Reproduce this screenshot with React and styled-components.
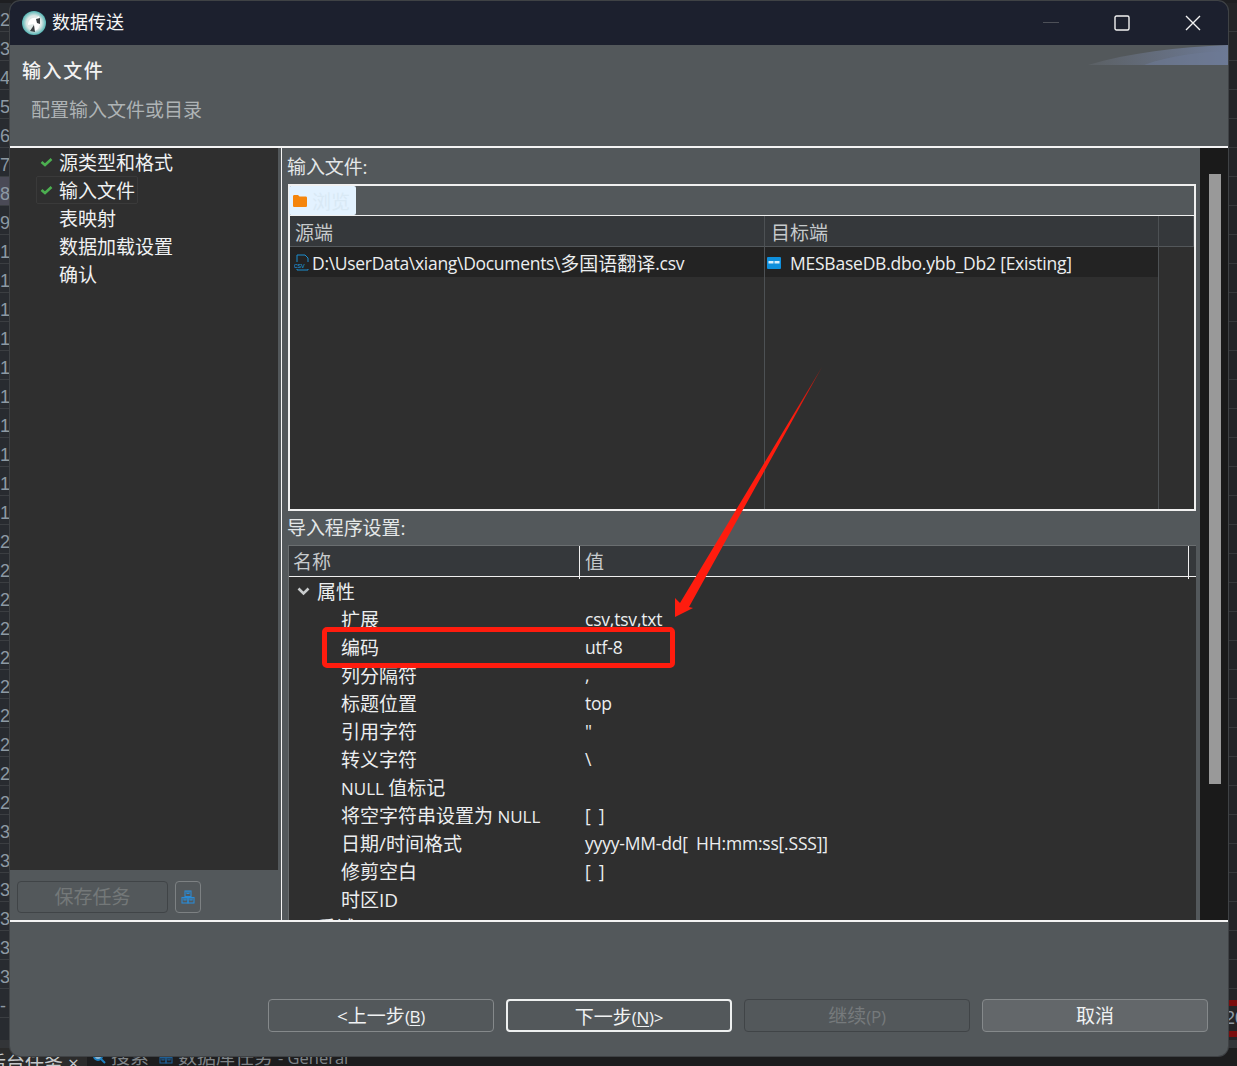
import React from "react";
import styled, { createGlobalStyle } from "styled-components";

const FONT = `"Open Sans", "Noto Sans CJK SC", sans-serif`;

const Global = createGlobalStyle`
  html, body { margin: 0; padding: 0; background: #1e1f22; }
  * { box-sizing: border-box; }
  body { font-family: ${FONT}; font-size: 18px; color: #eef0f1; }
`;

const Desktop = styled.div`
  position: relative;
  width: 1237px;
  height: 1066px;
  overflow: hidden;
  display: flex;
  flex-direction: column;
  background: #1e1f22;
`;
const Editor = styled.div`
  flex: 1;
  min-height: 0;
  padding-top: 3px;
  display: flex;
  justify-content: space-between;
  overflow: hidden;
`;
const Gutter = styled.div`
  width: 11px;
  display: flex;
  flex-direction: column;
  background: #282b30;
`;
const RightStrip = styled(Gutter)`
  width: 10px;
  background: #232427;
`;
const LineNo = styled.div`
  height: 29px;
  flex: none;
  border-bottom: 1px solid #3b3e42;
  font: 18px/34px "Liberation Sans", sans-serif;
  color: #8d99a3;
  background: ${(p) => (p.$hot ? "#4a4a56" : "transparent")};
  white-space: nowrap;
  overflow: hidden;
`;
const StripRow = styled.div`
  height: 29px;
  flex: none;
  border-bottom: 1px solid #36383b;
`;
const StripTail = styled.div`
  margin-top: 11px;
  height: 37px;
  flex: none;
  border-top: 6px solid #7a0c0c;
  border-bottom: 6px solid #7a0c0c;
  font: 18px/25px "Liberation Sans", sans-serif;
  color: #8d99a3;
  margin-left: -2px;
  white-space: nowrap;
`;
const TabBar = styled.div`
  height: 26px;
  flex: none;
  display: flex;
  align-items: center;
  background: #1d1d1e;
  border-top: 8px solid #333538;
  color: #7f8488;
  white-space: nowrap;
  overflow: hidden;
`;
const ActiveTab = styled.div`
  height: 100%;
  background: #2b2b2b;
  margin-left: -13px;
  flex: none;
  width: 100px;
  font-size: 19px;
  line-height: 31px;
  color: #c5c8ca;
`;
const TabItem = styled.div`
  display: flex;
  align-items: center;
  gap: 5px;
  margin-left: ${(p) => p.$ml || 0}px;
  font-size: 19px;
  line-height: 31px;
  height: 100%;
`;
const TabLatin = styled.span`
  font-size: 16.5px;
`;

const Win = styled.div`
  position: absolute;
  left: 10px;
  top: 1px;
  width: 1218px;
  height: 1055px;
  display: flex;
  flex-direction: column;
  overflow: hidden;
  border-radius: 10px;
  background: #53585b;
  box-shadow: 0 0 0 1px #3f4245;
`;
const TitleBar = styled.div`
  height: 44px;
  flex: none;
  background: #1c202e;
  display: flex;
  align-items: center;
  padding-left: 12px;
  font-size: 18px;
  line-height: 22px;
  color: #f5f5f5;
`;
const TitleText = styled.span`
  flex: 1;
  margin: 0 0 2px 6px;
`;
const WinButton = styled.div`
  width: 71px;
  height: 44px;
  flex: none;
  display: flex;
  align-items: center;
  justify-content: center;
`;
const Banner = styled.div`
  position: relative;
  height: 101px;
  flex: none;
  background: #53585b;
  padding: 13px 0 0 12px;
`;
const BannerArt = styled.svg`
  position: absolute;
  right: 0;
  top: 0;
`;
const BannerTitle = styled.div`
  font-size: 19px;
  line-height: 26px;
  font-weight: 500;
  letter-spacing: 1.6px;
  color: #f2f2f2;
`;
const BannerSub = styled.div`
  margin: 12px 0 0 9px;
  font-size: 19px;
  line-height: 28px;
  color: #aeb3b5;
`;
const WhiteRule = styled.div`
  height: 2px;
  flex: none;
  background: #f4f4f4;
`;
const Main = styled.div`
  height: 772px;
  flex: none;
  display: flex;
`;
const Left = styled.div`
  width: 268px;
  flex: none;
  display: flex;
  flex-direction: column;
`;
const Tree = styled.div`
  flex: 1;
  background: #2f2f2f;
  padding: 0 0 0 26px;
`;
const TreeRow = styled.div`
  height: 28px;
  width: 102px;
  display: flex;
  align-items: center;
  font-size: 19px;
  white-space: nowrap;
  color: #f0f2f3;
  border: 1px solid ${(p) => (p.$sel ? "#3a3a3a" : "transparent")};
  border-radius: 2px;
`;
const TreeIcon = styled.span`
  width: 22px;
  flex: none;
  display: flex;
  padding-left: 3px;
`;
const LeftFoot = styled.div`
  height: 50px;
  flex: none;
  display: flex;
  gap: 7px;
  padding: 11px 0 0 7px;
`;
const SaveBtn = styled.div`
  width: 151px;
  height: 32px;
  border: 1px solid #404447;
  border-radius: 4px;
  text-align: center;
  font-size: 19px;
  line-height: 31px;
  color: #747879;
`;
const IconBtn = styled.div`
  width: 26px;
  height: 32px;
  border: 1px solid #7d8183;
  border-radius: 4px;
  display: flex;
  align-items: center;
  justify-content: center;
`;
const Sash = styled.div`
  width: 4px;
  flex: none;
  border-right: 1px solid #f4f4f4;
`;
const Right = styled.div`
  width: 918px;
  flex: none;
  padding: 0 4px 0 6px;
  display: flex;
  flex-direction: column;
  min-height: 0;
  overflow: hidden;
`;
const GroupLabel = styled.div`
  height: ${(p) => p.$h}px;
  flex: none;
  font-size: 19px;
  line-height: ${(p) => p.$lh}px;
  letter-spacing: -0.1px;
  color: #e4e7e8;
  margin-left: -1px;
`;
const FileBox = styled.div`
  height: 327px;
  flex: none;
  border: 2px solid #f0f0f0;
  display: flex;
  flex-direction: column;
  background: #2f2f2f;
`;
const FileTools = styled.div`
  flex: none;
  height: 30px;
  background: #53585b;
  border-bottom: 1px solid #f0f0f0;
`;
const Browse = styled.div`
  width: 67px;
  height: 29px;
  margin-left: -1px;
  background: #e3f2ff;
  border-radius: 2px;
  display: flex;
  align-items: center;
  gap: 5px;
  padding-left: 4px;
  font-size: 19px;
  color: #d9e9f5;
`;
const FileGrid = styled.div`
  flex: 1;
  display: grid;
  grid-template-columns: 475px 394px 1fr;
  grid-template-rows: 31px 30px 1fr;
`;
const HeadCell = styled.div`
  background: #35383b;
  border-right: 1px solid #4d5154;
  border-bottom: 1px solid #53575a;
  font-size: 19px;
  line-height: 35px;
  padding-left: ${(p) => p.$pl || 6}px;
  color: #c6cacc;
`;
const FileCell = styled.div`
  background: #232323;
  border-right: 1px solid #4d5154;
  font-size: 17.5px;
  letter-spacing: ${(p) => p.$ls}px;
  display: flex;
  align-items: center;
  white-space: nowrap;
  color: #eceeef;
  gap: ${(p) => p.$gap || 0}px;
  padding: 1px 0 0 ${(p) => p.$pl || 0}px;
`;
const Cjk = styled.span`
  font-size: 19px;
  letter-spacing: 0;
`;
const EmptyCell = styled.div`
  background: #2f2f2f;
  border-right: 1px solid #4d5154;
`;
const EmptyEnd = styled.div`
  background: #2f2f2f;
`;
const PropsBox = styled.div`
  flex: 1;
  min-height: 0;
  background: #2f2f2f;
  overflow: hidden;
  border-left: 1px solid #6a6e70;
`;
const PropsHead = styled.div`
  height: 32px;
  background: #35383b;
  border-top: 1px solid #6a6e70;
  border-bottom: 1px solid #f0f0f0;
  display: grid;
  grid-template-columns: 291px 609px 1fr;
`;
const PropsHeadCell = styled.div`
  font-size: 19px;
  line-height: 33px;
  padding-left: ${(p) => p.$pl}px;
  color: #c6cacc;
  border-right: ${(p) => (p.$sep ? "1px solid #f0f0f0" : "none")};
`;
const SectionRow = styled.div`
  height: 28px;
  display: flex;
  align-items: center;
  gap: 7px;
  padding-left: 8px;
  font-size: 19px;
  color: #eceeef;
`;
const PropRow = styled.div`
  height: 28px;
  display: grid;
  grid-template-columns: 244px 1fr;
  padding-left: 52px;
  align-items: center;
  font-size: 17.5px;
  letter-spacing: -0.2px;
  word-spacing: 4px;
  color: #eceeef;
  white-space: nowrap;
`;
const PropName = styled.span`
  font-size: 19px;
  letter-spacing: 0;
  word-spacing: 0;
`;
const NameLatin = styled.span`
  font-size: 17px;
`;
const ScrollTrack = styled.div`
  width: 28px;
  flex: none;
  background: #1a1a1a;
  padding: 26px 6px 0 9px;
`;
const ScrollThumb = styled.div`
  width: 12px;
  height: 610px;
  background: #999;
`;
const Foot = styled.div`
  flex: 1;
  min-height: 0;
  display: flex;
  justify-content: flex-end;
  align-items: flex-start;
  gap: 12px;
  padding: 77px 20px 0 0;
`;
const FootBtn = styled.div`
  width: 226px;
  height: 33px;
  border-radius: 4px;
  text-align: center;
  font-size: 19px;
  line-height: 32px;
  border: ${(p) =>
    p.$kind === "primary" ? "2px solid #eef0f0" : p.$kind === "off" ? "1px solid #404447" : "1px solid #85898b"};
  background: ${(p) => (p.$kind === "cancel" ? "#63676a" : "transparent")};
  color: ${(p) => (p.$kind === "off" ? "#767a7c" : "#f0f2f3")};
`;
const Mnemonic = styled.span`
  font-size: 17px;
  letter-spacing: -0.3px;
`;
const Under = styled.u`
  text-underline-offset: 2px;
`;
const RedBox = styled.div`
  position: absolute;
  left: 322px;
  top: 627px;
  width: 353px;
  height: 41px;
  border: 5px solid #ff1c0e;
  border-radius: 5px;
`;
const ArrowSvg = styled.svg`
  position: absolute;
  left: 0;
  top: 0;
  pointer-events: none;
`;

const Check = () => (
  <svg width="13" height="10" viewBox="0 0 13 10">
    <path d="M1.5 5 L5 8 L11.5 2" fill="none" stroke="#4caf50" strokeWidth="2.6" />
  </svg>
);
const Boxes = ({ color = "#2a8ad4" }) => (
  <svg width="14" height="14" viewBox="0 0 14 14" fill="none" stroke={color} strokeWidth="1.1">
    <rect x="4" y="1" width="6" height="5.5" />
    <rect x="1" y="7.5" width="6" height="5.5" />
    <rect x="7" y="7.5" width="6" height="5.5" />
    <path d="M6 1v2.5h2V1M3 7.5V10h2V7.5M9 7.5V10h2V7.5" />
  </svg>
);

const lines = "23456789" + "1".repeat(10) + "2".repeat(10) + "3".repeat(6) + "-";
const steps = ["源类型和格式", "输入文件", "表映射", "数据加载设置", "确认"];
const props = [
  ["扩展", "csv,tsv,txt"],
  ["编码", "utf-8"],
  ["列分隔符", ","],
  ["标题位置", "top"],
  ["引用字符", '"'],
  ["转义字符", "\\"],
  [<><NameLatin>NULL </NameLatin>值标记</>, ""],
  [<>将空字符串设置为<NameLatin> NULL</NameLatin></>, "[ ]"],
  ["日期/时间格式", "yyyy-MM-dd[ HH:mm:ss[.SSS]]"],
  ["修剪空白", "[ ]"],
  ["时区ID", ""],
];

export default function App() {
  return (
    <Desktop>
      <Global />
      <Editor>
        <Gutter>
          {lines.split("").map((c, i) => (
            <LineNo key={i} $hot={i === 6}>{c}</LineNo>
          ))}
        </Gutter>
        <RightStrip>
          {Array.from({ length: 34 }).map((_, i) => (
            <StripRow key={i} />
          ))}
          <StripTail>20</StripTail>
        </RightStrip>
      </Editor>
      <TabBar>
        <ActiveTab>后台任务 ×</ActiveTab>
        <TabItem $ml={5}>
          <svg width="14" height="14" viewBox="0 0 14 14">
            <circle cx="6" cy="6" r="4" fill="#8fb6d0" stroke="#1c7fc0" strokeWidth="2" />
            <path d="M9 9l4 4" stroke="#1c7fc0" strokeWidth="2" />
          </svg>
          搜索
        </TabItem>
        <TabItem $ml={10}>
          <Boxes color="#1f5f96" />
          <span>数据库任务 <TabLatin>- General</TabLatin></span>
        </TabItem>
      </TabBar>

      <Win>
        <TitleBar>
          <svg width="24" height="24" viewBox="0 0 24 24">
            <defs>
              <radialGradient id="ic" cx="50%" cy="50%" r="55%">
                <stop offset="0.55" stopColor="#dfe8e6" />
                <stop offset="1" stopColor="#2fa6a6" />
              </radialGradient>
            </defs>
            <circle cx="12" cy="12" r="12" fill="url(#ic)" />
            <path d="M6 14 C6 9 10 6 14 7 L17 5 L18 13 C17 18 14 20 12 20 L12 13 Z" fill="#fff" />
            <path d="M14 8 L18 7 L18 13 L15 12 Z" fill="#3a3f42" />
            <path d="M8 20 L12 14 L13 21 Z" fill="#3a3f42" />
          </svg>
          <TitleText>数据传送</TitleText>
          <WinButton>
            <svg width="16" height="2"><rect width="16" height="1" fill="#4d5058" /></svg>
          </WinButton>
          <WinButton>
            <svg width="16" height="16" viewBox="0 0 16 16">
              <rect x="1" y="1" width="14" height="14" rx="1.5" fill="none" stroke="#f2f2f2" strokeWidth="1.4" />
            </svg>
          </WinButton>
          <WinButton>
            <svg width="16" height="16" viewBox="0 0 16 16">
              <path d="M1 1l14 14M15 1L1 15" stroke="#f2f2f2" strokeWidth="1.4" />
            </svg>
          </WinButton>
        </TitleBar>
        <Banner>
          <BannerArt width="140" height="20" viewBox="0 0 140 20">
            <defs>
              <linearGradient id="sw" x1="0" x2="1" y1="0" y2="0">
                <stop offset="0" stopColor="#5b6064" />
                <stop offset="1" stopColor="#6d7a96" />
              </linearGradient>
            </defs>
            <path d="M0 20 C40 8 90 2 140 0 V20 Z" fill="url(#sw)" />
            <path d="M56 20 C80 11 110 7 140 6 V20 Z" fill="#6d7a96" opacity="0.55" />
          </BannerArt>
          <BannerTitle>输入文件</BannerTitle>
          <BannerSub>配置输入文件或目录</BannerSub>
        </Banner>
        <WhiteRule />
        <Main>
          <Left>
            <Tree>
              {steps.map((s, i) => (
                <TreeRow key={s} $sel={i === 1}>
                  <TreeIcon>{i < 2 && <Check />}</TreeIcon>
                  {s}
                </TreeRow>
              ))}
            </Tree>
            <LeftFoot>
              <SaveBtn>保存任务</SaveBtn>
              <IconBtn><Boxes /></IconBtn>
            </LeftFoot>
          </Left>
          <Sash />
          <Right>
            <GroupLabel $h={36} $lh={38}>输入文件:</GroupLabel>
            <FileBox>
              <FileTools>
                <Browse>
                  <svg width="14" height="12" viewBox="0 0 14 12">
                    <path d="M0 1.5C0 .7.5 0 1.3 0H5l1.5 1.5h6.2c.7 0 1.3.6 1.3 1.3V10.700c0 .7-.6 1.300-1.300 1.300H1.300C.6 12 0 11.400 0 10.700Z" fill="#f5850c" />
                  </svg>
                  浏览
                </Browse>
              </FileTools>
              <FileGrid>
                <HeadCell $pl={5}>源端</HeadCell>
                <HeadCell>目标端</HeadCell>
                <HeadCell />
                <FileCell $pl={4} $ls={-0.3}>
                  <svg width="18" height="17" viewBox="0 0 18 17" style={{ flex: "none" }}>
                    <path d="M3 8V1h8l3 3v4M3 15v1h11v-1" fill="none" stroke="#1d8fd0" strokeWidth="1" />
                    <text x="0" y="14" fontSize="7.500" fontFamily="Liberation Sans" fill="#1d8fd0">csv</text>
                  </svg>
                  D:\UserData\xiang\Documents\<Cjk>多国语翻译</Cjk>.csv
                </FileCell>
                <FileCell $pl={2} $gap={9} $ls={-0.23}>
                  <svg width="14" height="12" viewBox="0 0 14 12" style={{ flex: "none" }}>
                    <rect width="14" height="12" rx="1" fill="#0f8fdc" />
                    <rect x="1.500" y="4" width="5" height="2.500" fill="#d8eefb" />
                    <rect x="7.500" y="4" width="5" height="2.500" fill="#d8eefb" />
                  </svg>
                  MESBaseDB.dbo.ybb_Db2 [Existing]
                </FileCell>
                <EmptyEnd />
                <EmptyCell />
                <EmptyCell />
                <EmptyEnd />
              </FileGrid>
            </FileBox>
            <GroupLabel $h={34} $lh={35}>导入程序设置:</GroupLabel>
            <PropsBox>
              <PropsHead>
                <PropsHeadCell $pl={4} $sep>名称</PropsHeadCell>
                <PropsHeadCell $pl={5} $sep>值</PropsHeadCell>
                <PropsHeadCell $pl={0} />
              </PropsHead>
              <SectionRow>
                <svg width="13" height="9" viewBox="0 0 13 9">
                  <path d="M1.500 1.500L6.500 6.500L11.500 1.500" fill="none" stroke="#c9cccd" strokeWidth="2.600" />
                </svg>
                属性
              </SectionRow>
              {props.map(([n, v], i) => (
                <PropRow key={i}>
                  <PropName>{n}</PropName>
                  <span>{v}</span>
                </PropRow>
              ))}
              <SectionRow>
                <svg width="13" height="9" />
                重试
              </SectionRow>
            </PropsBox>
          </Right>
          <ScrollTrack>
            <ScrollThumb />
          </ScrollTrack>
        </Main>
        <WhiteRule />
        <Foot>
          <FootBtn>&lt;上一步<Mnemonic>(<Under>B</Under>)</Mnemonic></FootBtn>
          <FootBtn $kind="primary">下一步<Mnemonic>(<Under>N</Under>)&gt;</Mnemonic></FootBtn>
          <FootBtn $kind="off">继续<Mnemonic>(P)</Mnemonic></FootBtn>
          <FootBtn $kind="cancel">取消</FootBtn>
        </Foot>
      </Win>

      <RedBox />
      <ArrowSvg width="1237" height="1066" viewBox="0 0 1237 1066">
        <defs>
          <linearGradient id="ar" x1="822" y1="367" x2="760" y2="473" gradientUnits="userSpaceOnUse">
            <stop offset="0" stopColor="#a01a12" />
            <stop offset="0.5" stopColor="#ff1c0e" />
          </linearGradient>
        </defs>
        <polygon points="822,367 689,607 693,608 675,617 675,598 680,603" fill="url(#ar)" />
      </ArrowSvg>
    </Desktop>
  );
}
